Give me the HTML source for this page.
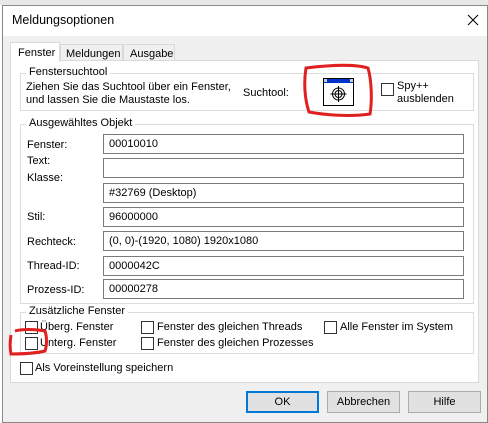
<!DOCTYPE html>
<html><head><meta charset="utf-8"><style>
*{margin:0;padding:0;box-sizing:border-box}
body{width:488px;height:423px;background:#fff;font-family:"Liberation Sans",sans-serif;font-size:11px;color:#000;position:relative;overflow:hidden}
.a{position:absolute;white-space:nowrap}
.box{position:absolute;border:1px solid #7a7a7a;background:#fff;height:20px;left:103px;width:361px;padding:3px 0 0 5px}
.cb{position:absolute;width:13px;height:13px;border:1px solid #333;background:#fff}
.grp{position:absolute;border:1px solid #dcdcdc}
.lg{position:absolute;background:#fff;padding:0 3px;top:-8px;left:5px}
.btn{position:absolute;top:391px;width:73px;height:22px;border:1px solid #adadad;background:#e1e1e1;text-align:center;line-height:20px}
</style></head><body>
<div class="a" style="left:0;top:0;width:488px;height:5px;background:#e8e8e8"></div>
<div class="a" style="left:2px;top:5px;width:486px;height:418px;background:#f0f0f0;border:1px solid #888"></div>
<div class="a" style="left:3px;top:6px;width:484px;height:30px;background:#fff"></div>
<div class="a" style="left:12px;top:13px;font-size:12.5px">Meldungsoptionen</div>
<svg class="a" style="left:467px;top:14px" width="12" height="12"><path d="M1 1L11 11M11 1L1 11" stroke="#000" stroke-width="1"/></svg>
<div class="a" style="left:10px;top:60px;width:469px;height:323px;background:#fff;border:1px solid #d9d9d9"></div>
<div class="a" style="left:10px;top:42px;width:50px;height:20px;background:#fff;border:1px solid #d9d9d9;border-bottom:none;padding:4px 0 0 7px">Fenster</div>
<div class="a" style="left:60px;top:44px;width:63px;height:16px;background:#f0f0f0;border:1px solid #d9d9d9;border-bottom:none;padding:3px 0 0 5px">Meldungen</div>
<div class="a" style="left:123px;top:44px;width:52px;height:16px;background:#f0f0f0;border:1px solid #d9d9d9;border-bottom:none;padding:3px 0 0 6px">Ausgabe</div>
<div class="grp" style="left:20px;top:73px;width:454px;height:38px"><span class="lg" style="top:-8px">Fenstersuchtool</span></div>
<div class="a" style="left:26px;top:81px;line-height:13px">Ziehen Sie das Suchtool über ein Fenster,<br>und lassen Sie die Maustaste los.</div>
<div class="a" style="left:243px;top:87px">Suchtool:</div>
<svg class="a" style="left:322px;top:77px" width="33" height="30">
<rect x="1.5" y="1.5" width="30" height="27" fill="#fff" stroke="#000"/>
<rect x="2" y="2" width="29" height="4" fill="#0033cc"/>
<rect x="2" y="2" width="3" height="3" fill="#ccc"/><rect x="28" y="2" width="3" height="3" fill="#ccc"/>
<circle cx="16.5" cy="17" r="6" fill="none" stroke="#000"/><circle cx="16.5" cy="17" r="3.5" fill="none" stroke="#000"/>
<path d="M16.5 9v16M8.5 17h16" stroke="#000"/>
</svg>
<svg class="a" style="left:300px;top:62px" width="76" height="60"><path d="M6 6C30 3 55 2 68 6C72 20 72 40 70 52C50 55 25 53 9 50C4 35 4 18 6 6Z" fill="none" stroke="#e0201e" stroke-width="3"/></svg>
<div class="cb" style="left:381px;top:83px"></div>
<div class="a" style="left:397px;top:80px;line-height:13px">Spy++<br>ausblenden</div>
<div class="grp" style="left:20px;top:124px;width:454px;height:180px"><span class="lg">Ausgewähltes Objekt</span></div>
<div class="a" style="left:27px;top:139px">Fenster:</div>
<div class="a" style="left:27px;top:155px">Text:</div>
<div class="a" style="left:27px;top:172px">Klasse:</div>
<div class="a" style="left:27px;top:211px">Stil:</div>
<div class="a" style="left:27px;top:236px">Rechteck:</div>
<div class="a" style="left:27px;top:260px">Thread-ID:</div>
<div class="a" style="left:27px;top:284px">Prozess-ID:</div>
<div class="box" style="top:134px">00010010</div>
<div class="box" style="top:158px"></div>
<div class="box" style="top:183px">#32769 (Desktop)</div>
<div class="box" style="top:207px">96000000</div>
<div class="box" style="top:231px">(0, 0)-(1920, 1080) 1920x1080</div>
<div class="box" style="top:256px">0000042C</div>
<div class="box" style="top:279px">00000278</div>
<div class="grp" style="left:20px;top:312px;width:454px;height:42px"><span class="lg">Zusätzliche Fenster</span></div>
<div class="cb" style="left:25px;top:321px"></div><div class="a" style="left:40px;top:321px">Überg. Fenster</div>
<div class="cb" style="left:25px;top:337px"></div><div class="a" style="left:40px;top:337px">Unterg. Fenster</div>
<div class="cb" style="left:141px;top:321px"></div><div class="a" style="left:157px;top:321px">Fenster des gleichen Threads</div>
<div class="cb" style="left:141px;top:337px"></div><div class="a" style="left:157px;top:337px">Fenster des gleichen Prozesses</div>
<div class="cb" style="left:324px;top:321px"></div><div class="a" style="left:340px;top:321px">Alle Fenster im System</div>
<svg class="a" style="left:7px;top:327px" width="42" height="30"><path d="M4 8C3 14 3 22 4 27C15 27 30 26 38 24C40 18 40 10 38 4C28 2 15 2 8 4" fill="none" stroke="#e0201e" stroke-width="3"/></svg>
<div class="cb" style="left:20px;top:362px"></div><div class="a" style="left:35px;top:362px">Als Voreinstellung speichern</div>
<div class="btn" style="left:246px;border:2px solid #0078d7;line-height:18px">OK</div>
<div class="btn" style="left:327px">Abbrechen</div>
<div class="btn" style="left:408px">Hilfe</div>
</body></html>
